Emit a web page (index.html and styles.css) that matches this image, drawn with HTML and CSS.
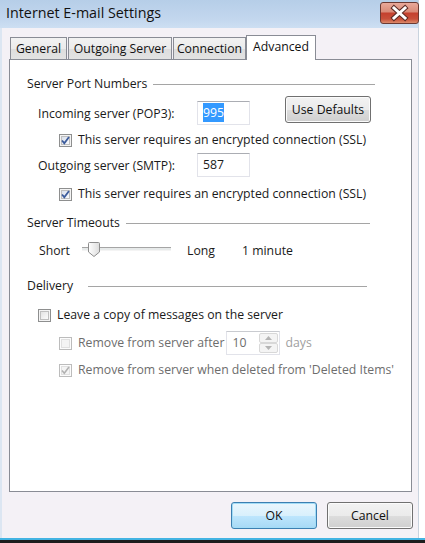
FILE: index.html
```html
<!DOCTYPE html>
<html>
<head>
<meta charset="utf-8">
<link rel="stylesheet" href="styles.css">
</head>
<body>
<div class="window">
  <div class="titlebar">
    <span class="title">Internet E-mail Settings</span>
    <span class="close">
      <svg width="39" height="22" viewBox="0 0 39 22">
        <path d="M14 6 L25 16 M25 6 L14 16" stroke="#5a2a24" stroke-width="5" stroke-linecap="square" fill="none"/>
        <path d="M14 6 L25 16 M25 6 L14 16" stroke="#ffffff" stroke-width="3" stroke-linecap="square" fill="none"/>
      </svg>
    </span>
  </div>
  <div class="client">
    <div class="tabs">
      <div class="tab tab-general">General</div>
      <div class="tab tab-outgoing">Outgoing Server</div>
      <div class="tab tab-connection">Connection</div>
      <div class="tab tab-advanced active">Advanced</div>
    </div>
    <div class="panel">
      <div class="group-head head-ports"><span class="head-text">Server Port Numbers</span><span class="rule"></span></div>

      <div class="port-row port-in">
        <span class="port-label">Incoming server (POP3):</span>
        <span class="field"><span class="sel">995</span></span>
        <span class="btn btn-defaults">Use Defaults</span>
      </div>
      <div class="check-row indent2 ssl-1">
        <span class="cb"><svg width="9" height="9" viewBox="0 0 9 9"><path d="M1 4.5 L3.3 7.2 L8 1" stroke="#3d5c9c" stroke-width="1.8" fill="none"/></svg></span>
        <span class="cb-label">This server requires an encrypted connection (SSL)</span>
      </div>

      <div class="port-row port-out">
        <span class="port-label">Outgoing server (SMTP):</span>
        <span class="field">587</span>
      </div>
      <div class="check-row indent2 ssl-2">
        <span class="cb"><svg width="9" height="9" viewBox="0 0 9 9"><path d="M1 4.5 L3.3 7.2 L8 1" stroke="#3d5c9c" stroke-width="1.8" fill="none"/></svg></span>
        <span class="cb-label">This server requires an encrypted connection (SSL)</span>
      </div>

      <div class="group-head head-timeouts"><span class="head-text">Server Timeouts</span><span class="rule"></span></div>
      <div class="slider-row">
        <span class="sl-short">Short</span>
        <span class="track">
          <span class="track-line"></span>
          <svg class="thumb" width="12" height="15" viewBox="0 0 12 15">
            <defs><linearGradient id="tg" x1="0" y1="0" x2="1" y2="0"><stop offset="0" stop-color="#ffffff"/><stop offset="1" stop-color="#dcdcdc"/></linearGradient></defs>
            <path d="M1.5 0.5 H10.5 Q11.5 0.5 11.5 1.5 V10 L6 14.5 L0.5 10 V1.5 Q0.5 0.5 1.5 0.5 Z" fill="url(#tg)" stroke="#8d8d8d"/>
          </svg>
        </span>
        <span class="sl-long">Long</span>
        <span class="sl-val">1 minute</span>
      </div>

      <div class="group-head head-delivery"><span class="head-text">Delivery</span><span class="rule"></span></div>
      <div class="check-row indent1 leave">
        <span class="cb"></span>
        <span class="cb-label">Leave a copy of messages on the server</span>
      </div>
      <div class="check-row indent2 remove-after disabled">
        <span class="cb"></span>
        <span class="cb-label">Remove from server after</span>
        <span class="spin">
          <span class="spin-val">10</span>
          <span class="spin-btns">
            <span class="spin-btn"><svg width="7" height="4" viewBox="0 0 7 4"><path d="M0 4 L3.5 0 L7 4 Z" fill="#b4b4b4"/></svg></span>
            <span class="spin-btn"><svg width="7" height="4" viewBox="0 0 7 4"><path d="M0 0 L3.5 4 L7 0 Z" fill="#b4b4b4"/></svg></span>
          </span>
        </span>
        <span class="days">days</span>
      </div>
      <div class="check-row indent2 remove-deleted disabled">
        <span class="cb"><svg width="9" height="9" viewBox="0 0 9 9"><path d="M1 4.5 L3.3 7.2 L8 1" stroke="#b1b1b1" stroke-width="1.6" fill="none"/></svg></span>
        <span class="cb-label">Remove from server when deleted from 'Deleted Items'</span>
      </div>
    </div>
    <div class="actions">
      <span class="btn btn-ok">OK</span>
      <span class="btn btn-cancel">Cancel</span>
    </div>
  </div>
</div>
<div class="bottom-edge"></div>
</body>
</html>
```
FILE: styles.css
```css
html, body {
  margin: 0;
  padding: 0;
  background: #ffffff;
}
body {
  width: 425px;
  height: 543px;
  overflow: hidden;
  font-family: "Open Sans", "Noto Sans", sans-serif;
  font-size: 12.25px;
  color: #1a1a1a;
}
.window {
  width: 419px;
  height: 538px;
  display: flex;
  flex-direction: column;
  background: #f4f1f6;
  border-left: 2px solid #dce6f2;
  border-right: 1px solid #c9d3de;
  box-sizing: border-box;
}
.titlebar {
  height: 28px;
  flex: none;
  display: flex;
  align-items: flex-start;
  justify-content: space-between;
  background: linear-gradient(#b6cee8, #c3d7ee 70%, #cddff2);
  margin-left: -2px;
  padding-left: 6px;
  padding-right: 0;
}
.title {
  font-size: 14.3px;
  line-height: 28px;
  color: #111;
  margin-top: -1px;
}
.close {
  width: 39px;
  height: 22px;
  margin-top: 2px;
  margin-right: -1px;
  border: 1px solid #6b3a33;
  border-radius: 3px;
  box-sizing: border-box;
  background: linear-gradient(#e9a99a, #d98a77 45%, #c4402e 50%, #c8503a 80%, #dc8b6c);
  display: flex;
  align-items: center;
  justify-content: center;
  overflow: hidden;
}
.close svg { margin: -1px; }
.client {
  flex: 1;
  display: flex;
  flex-direction: column;
  padding: 7px 6px 9px 7px;
}
.tabs {
  display: flex;
  align-items: flex-end;
  height: 24px;
  position: relative;
  z-index: 2;
}
.tab {
  height: 22px;
  box-sizing: border-box;
  border: 1px solid #898c95;
  border-bottom: none;
  background: linear-gradient(#f2f2f2, #ebebeb 50%, #dddddd 51%, #e3e3e3);
  line-height: 21px;
  text-align: center;
  font-size: 12.25px;
  color: #111;
}
.tab-general { width: 57px; margin-left: 1px; margin-right: 1px; }
.tab-outgoing { width: 104px; margin-right: 1px; }
.tab-connection { width: 73px; }
.tab-advanced {
  width: 70px;
  height: 25px;
  margin-bottom: -1px;
  background: #ffffff;
  line-height: 21px;
}
.panel {
  flex: 1;
  background: #ffffff;
  border: 1px solid #898c95;
  padding-top: 16px;
  display: flex;
  flex-direction: column;
  align-items: flex-start;
}
.group-head {
  display: flex;
  align-items: center;
  height: 16px;
  line-height: 16px;
  margin-left: 17px;
}
.head-ports { width: 348px; }
.head-timeouts { width: 343px; margin-top: 13px; }
.head-delivery { width: 340px; margin-top: 19px; }
.rule {
  flex: 1;
  height: 1px;
  background: #a5a5a5;
  margin-left: 6px;
  margin-top: 1px;
}
.head-delivery .rule { margin-left: 15px; }

.port-row {
  display: flex;
  align-items: flex-start;
  margin-left: 28px;
}
.port-in { margin-top: 4px; height: 27px; }
.port-out { margin-top: 5px; }
.port-label {
  width: 159px;
  height: 24px;
  line-height: 26px;
}
.port-in .port-label, .port-in .field { margin-top: 5px; }
.field {
  width: 53px;
  height: 24px;
  box-sizing: border-box;
  border: 1px solid #e2e3ea;
  border-top-color: #abadb3;
  padding-left: 5px;
  line-height: 21px;
}
.sel {
  background: #3399ff;
  color: #ffffff;
  padding: 1px 0;
}
.btn {
  display: inline-flex;
  align-items: center;
  justify-content: center;
  box-sizing: border-box;
  border: 1px solid #707070;
  border-radius: 3px;
  background: linear-gradient(#f2f2f2, #ebebeb 50%, #dddddd 51%, #cfcfcf);
  box-shadow: inset 0 0 0 1px #fbfbfb;
  color: #111;
}
.btn-defaults {
  width: 86px;
  height: 27px;
  margin-left: 35px;
}
.check-row {
  display: flex;
  align-items: center;
  height: 16px;
  line-height: 16px;
}
.indent1 { margin-left: 28px; }
.indent2 { margin-left: 49px; }
.ssl-1 { margin-top: 9px; }
.ssl-2 { margin-top: 9px; }
.leave { margin-top: 13px; }
.remove-after { margin-top: 8px; height: 24px; }
.remove-deleted { margin-top: 7px; }
.cb {
  width: 13px;
  height: 13px;
  box-sizing: border-box;
  border: 1px solid #8e8f8f;
  background: linear-gradient(135deg, #dcdcdc, #f7f7f7 70%, #ffffff);
  box-shadow: inset 0 0 0 1px #f4f4f4, inset 0 0 0 2px #bfbfbf;
  display: flex;
  align-items: center;
  justify-content: center;
  flex: none;
  margin-right: 6px;
}
.ssl-1 .cb, .ssl-2 .cb {
  background: linear-gradient(135deg, #cfd7e6, #f4f6fa 70%, #ffffff);
}
.disabled .cb {
  border-color: #bcbcbc;
  background: #f4f4f4;
  box-shadow: inset 0 0 0 1px #fcfcfc, inset 0 0 0 2px #e0e0e0;
}
.disabled .cb-label { color: #6d6d6d; }
.spin {
  width: 54px;
  height: 24px;
  box-sizing: border-box;
  border: 1px solid #e2e3ea;
  border-top-color: #c9cbd0;
  margin-left: 2px;
  display: flex;
  align-items: stretch;
}
.spin-val {
  flex: 1;
  padding-left: 5px;
  line-height: 21px;
  color: #6d6d6d;
}
.spin-btns {
  width: 19px;
  display: flex;
  flex-direction: column;
  padding: 1px 1px 1px 0;
}
.spin-btn {
  flex: 1;
  border: 1px solid #d8d8d8;
  border-radius: 2px;
  background: #f4f4f4;
  display: flex;
  align-items: center;
  justify-content: center;
}
.days {
  color: #a0a0a0;
  margin-left: 5px;
}
.slider-row {
  display: flex;
  align-items: center;
  height: 18px;
  margin-top: 10px;
  margin-left: 29px;
}
.sl-short { width: 43px; }
.track {
  width: 89px;
  height: 18px;
  display: flex;
  align-items: center;
  position: relative;
}
.track-line {
  flex: 1;
  height: 2px;
  border-top: 1px solid #a5a5a5;
  background: #e7eaea;
  border-bottom: 1px solid #f4f4f4;
  margin-top: -3px;
}
.thumb {
  position: absolute;
  left: 6px;
  top: 1px;
}
.sl-long { width: 55px; margin-left: 16px; }
.actions {
  display: flex;
  justify-content: flex-end;
  gap: 10px;
  margin-top: 10px;
  height: 27px;
  margin-right: -1px;
}
.btn-ok {
  width: 86px;
  height: 27px;
  border-color: #3c7fb1;
  background: linear-gradient(#eaf6fd, #d9f0fc 50%, #bee6fd 51%, #a7d9f5);
  box-shadow: inset 0 0 0 1px #a2dcf6;
}
.btn-cancel {
  width: 86px;
  height: 27px;
}
.bottom-edge {
  height: 5px;
  border-top: 2px solid #42b3e2;
  background: #1d1d1d;
}
```
